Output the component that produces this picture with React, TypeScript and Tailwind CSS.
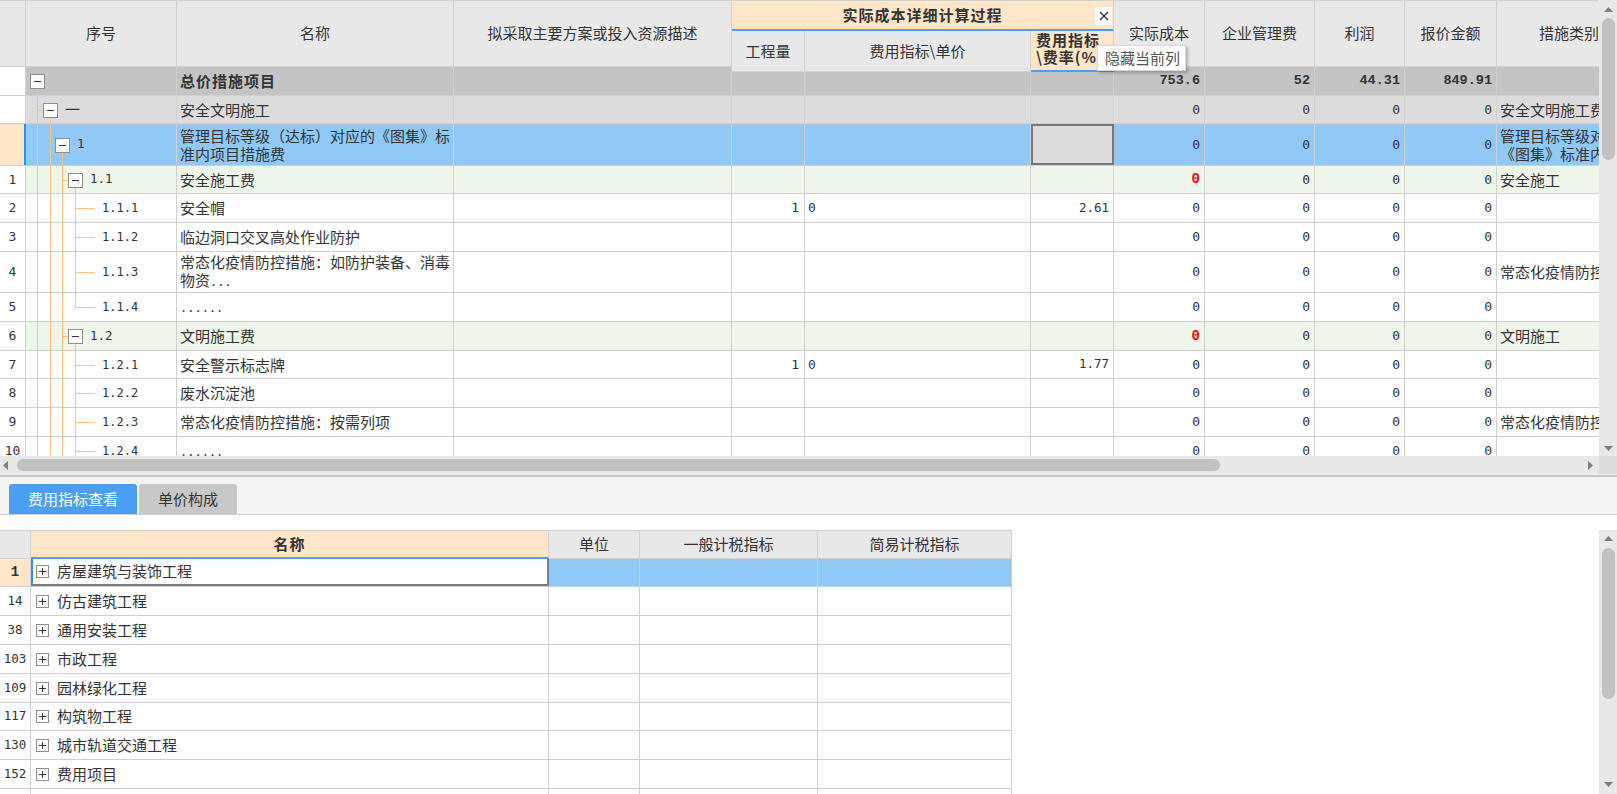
import React from "react";

const F = "font-['Noto_Sans_CJK_SC',sans-serif]";
const M = "font-['DejaVu_Sans_Mono','Noto_Sans_CJK_SC',monospace]";
const MB = "font-['Liberation_Mono','Noto_Sans_CJK_SC',monospace]";

const LINE_X = ["left-[11px]", "left-[24px]", "left-[36px]", "left-[49px]"];
const BOX_X = ["left-[4px]", "left-[17px]", "left-[29px]", "left-[42px]"];
const CONN = ["", "left-[11px] w-[6px]", "left-[24px] w-[5px]", "left-[36px] w-[6px]"];
const LABEL_ML = ["ml-[26px]", "ml-[39px]", "ml-[51px]", "ml-[64px]"];
const LC = "absolute bg-[#f7c282]";

type TreeSpec =
  | { kind: "node"; level: number; label?: string }
  | { kind: "leaf"; last?: boolean; label: string };

function MinusBox({ pos }: { pos: string }) {
  return (
    <div className={`absolute top-[calc(50%-7px)] ${pos} w-[15px] h-[15px] bg-white border border-[#8e8e8e]`}>
      <div className="absolute left-[3px] top-[6px] w-[7px] h-px bg-[#333]" />
    </div>
  );
}

function PlusBox() {
  return (
    <div className="relative w-[13px] h-[13px] shrink-0 bg-white border border-[#8e8e8e]">
      <div className="absolute left-[2px] top-[5px] w-[7px] h-px bg-[#333]" />
      <div className="absolute left-[5px] top-[2px] w-px h-[7px] bg-[#333]" />
    </div>
  );
}

function TreeCell({ spec }: { spec: TreeSpec }) {
  if (spec.kind === "node") {
    const L = spec.level;
    return (
      <>
        {[0, 1, 2].slice(0, L).map((i) => (
          <div key={i} className={`${LC} top-0 bottom-0 w-px ${LINE_X[i]}`} />
        ))}
        {L > 0 && <div className={`${LC} top-1/2 h-px ${CONN[L]}`} />}
        <div className={`${LC} top-1/2 bottom-0 w-px ${LINE_X[L]}`} />
        <MinusBox pos={BOX_X[L]} />
        {spec.label && (
          <span
            className={`${LABEL_ML[L]} ${
              spec.label === "一" ? "text-[15px]" : `${M} text-[12.5px]`
            }`}
          >
            {spec.label}
          </span>
        )}
      </>
    );
  }
  return (
    <>
      {[0, 1, 2].map((i) => (
        <div key={i} className={`${LC} top-0 bottom-0 w-px ${LINE_X[i]}`} />
      ))}
      {spec.last ? (
        <div className={`${LC} top-0 h-1/2 w-px left-[49px]`} />
      ) : (
        <div className={`${LC} top-0 bottom-0 w-px left-[49px]`} />
      )}
      <div className={`${LC} top-1/2 h-px left-[49px] w-[20px]`} />
      <span className={`ml-[76px] ${M} text-[12px]`}>{spec.label}</span>
    </>
  );
}

type Row = {
  h: string;
  bg: string;
  num?: string;
  tree: TreeSpec;
  name: React.ReactNode;
  bold?: boolean;
  sel?: boolean;
  qty?: string;
  price?: string;
  rate?: string;
  v: string[];
  red?: boolean;
  cat?: React.ReactNode;
};

const Z = ["0", "0", "0", "0"];
const dots = <span className={`${M} text-[12px]`}>......</span>;

const rows: Row[] = [
  { h: "h-[29px]", bg: "bg-[#c4c4c4]", tree: { kind: "node", level: 0 }, name: "总价措施项目", bold: true, v: ["753.6", "52", "44.31", "849.91"] },
  { h: "h-[28px]", bg: "bg-[#dcdcdc]", tree: { kind: "node", level: 1, label: "一" }, name: "安全文明施工", v: Z, cat: "安全文明施工费" },
  {
    h: "h-[42px]",
    bg: "bg-[#90c8f6]",
    sel: true,
    tree: { kind: "node", level: 2, label: "1" },
    name: (
      <>
        管理目标等级（达标）对应的《图集》标
        <br />
        准内项目措施费
      </>
    ),
    v: Z,
    cat: (
      <>
        管理目标等级对应的
        <br />
        《图集》标准内项目措施费
      </>
    ),
  },
  { h: "h-[28px]", bg: "bg-[#edf6e8]", num: "1", tree: { kind: "node", level: 3, label: "1.1" }, name: "安全施工费", red: true, v: Z, cat: "安全施工" },
  { h: "h-[29px]", bg: "bg-white", num: "2", tree: { kind: "leaf", label: "1.1.1" }, name: "安全帽", qty: "1", price: "0", rate: "2.61", v: Z },
  { h: "h-[29px]", bg: "bg-white", num: "3", tree: { kind: "leaf", label: "1.1.2" }, name: "临边洞口交叉高处作业防护", v: Z },
  {
    h: "h-[41px]",
    bg: "bg-white",
    num: "4",
    tree: { kind: "leaf", label: "1.1.3" },
    name: (
      <>
        常态化疫情防控措施：如防护装备、消毒
        <br />
        物资<span className={`${M} text-[12px]`}>...</span>
      </>
    ),
    v: Z,
    cat: "常态化疫情防控措施",
  },
  { h: "h-[29px]", bg: "bg-white", num: "5", tree: { kind: "leaf", label: "1.1.4", last: true }, name: dots, v: Z },
  { h: "h-[29px]", bg: "bg-[#edf6e8]", num: "6", tree: { kind: "node", level: 3, label: "1.2" }, name: "文明施工费", red: true, v: Z, cat: "文明施工" },
  { h: "h-[28px]", bg: "bg-white", num: "7", tree: { kind: "leaf", label: "1.2.1" }, name: "安全警示标志牌", qty: "1", price: "0", rate: "1.77", v: Z },
  { h: "h-[29px]", bg: "bg-white", num: "8", tree: { kind: "leaf", label: "1.2.2" }, name: "废水沉淀池", v: Z },
  { h: "h-[29px]", bg: "bg-white", num: "9", tree: { kind: "leaf", label: "1.2.3" }, name: "常态化疫情防控措施：按需列项", v: Z, cat: "常态化疫情防控措施" },
  { h: "h-[29px]", bg: "bg-white", num: "10", tree: { kind: "leaf", label: "1.2.4" }, name: dots, v: Z },
];

const CELL = "shrink-0 h-full border-r border-[#d0d0d0] overflow-hidden flex items-center";
const HCELL = "shrink-0 h-full border-r border-b border-[#d0d0d0] bg-[#e8e8e8] flex items-center justify-center text-[15px]";

function TopRow({ r }: { r: Row }) {
  const numCls = r.bold ? `${MB} text-[13.5px] font-bold` : `${M} text-[13px]`;
  return (
    <div className={`flex ${r.h} shrink-0 border-b border-[#d0d0d0] ${r.bg}`}>
      <div
        className={`shrink-0 h-full w-[26px] overflow-hidden flex items-center justify-center ${M} text-[13px] ${
          r.sel ? "bg-[#ffe6c9] border-r-2 border-[#3a8ee6]" : "bg-white border-r border-[#d0d0d0]"
        }`}
      >
        {r.num}
      </div>
      <div className={`${CELL} w-[151px] relative`}>
        <TreeCell spec={r.tree} />
      </div>
      <div className={`${CELL} w-[277px] pl-[3px] text-[15px] leading-[18px] ${r.bold ? "font-bold tracking-[1px]" : ""}`}>
        <div>{r.name}</div>
      </div>
      <div className={`${CELL} w-[278px]`} />
      <div className={`${CELL} w-[73px] justify-end pr-[5px] ${M} text-[13px]`}>{r.qty}</div>
      <div className={`${CELL} w-[226px] pl-[3px] ${M} text-[13px]`}>{r.price}</div>
      {r.sel ? (
        <div className="shrink-0 h-full w-[83px] border-2 border-[#777] bg-[#dcdcdc]" />
      ) : (
        <div className={`${CELL} w-[83px] justify-end pr-[4px] ${M} text-[12.5px]`}>{r.rate}</div>
      )}
      <div className={`${CELL} w-[91px] justify-end pr-[4px]`}>
        {r.red ? (
          <span className={`${MB} text-[14px] font-bold text-[#ff0000]`}>{r.v[0]}</span>
        ) : (
          <span className={numCls}>{r.v[0]}</span>
        )}
      </div>
      <div className={`${CELL} w-[110px] justify-end pr-[4px]`}>
        <span className={numCls}>{r.v[1]}</span>
      </div>
      <div className={`${CELL} w-[90px] justify-end pr-[4px]`}>
        <span className={numCls}>{r.v[2]}</span>
      </div>
      <div className={`${CELL} w-[92px] justify-end pr-[4px]`}>
        <span className={numCls}>{r.v[3]}</span>
      </div>
      <div className={`${CELL} w-[145px] pl-[3px] text-[15px] leading-[18px] whitespace-nowrap`}>
        <div>{r.cat}</div>
      </div>
    </div>
  );
}

function UpArrow() {
  return (
    <svg width="9" height="5" viewBox="0 0 9 5" className="shrink-0">
      <polygon points="0,5 9,5 4.5,0" fill="#7d7d7d" />
    </svg>
  );
}
function DownArrow() {
  return (
    <svg width="9" height="5" viewBox="0 0 9 5" className="shrink-0">
      <polygon points="0,0 9,0 4.5,5" fill="#7d7d7d" />
    </svg>
  );
}
function LeftArrow() {
  return (
    <svg width="5" height="9" viewBox="0 0 5 9" className="shrink-0">
      <polygon points="5,0 5,9 0,4.5" fill="#7d7d7d" />
    </svg>
  );
}
function RightArrow() {
  return (
    <svg width="5" height="9" viewBox="0 0 5 9" className="shrink-0">
      <polygon points="0,0 0,9 5,4.5" fill="#7d7d7d" />
    </svg>
  );
}

function TopHeader() {
  return (
    <div className="flex h-[67px] shrink-0 border-t border-[#cfcfcf] relative">
      <div className={`${HCELL} w-[26px]`} />
      <div className={`${HCELL} w-[151px]`}>序号</div>
      <div className={`${HCELL} w-[277px]`}>名称</div>
      <div className={`${HCELL} w-[278px]`}>拟采取主要方案或投入资源描述</div>
      <div className="shrink-0 w-[382px] h-full flex flex-col">
        <div className="relative h-[30px] shrink-0 bg-[#ffe6c9] border-b-2 border-[#4a9ff5] border-r border-r-[#d0d0d0] flex items-center justify-center text-[15px] font-bold tracking-[1px]">
          实际成本详细计算过程
          <div className="absolute right-[1px] top-[6px] w-[17px] h-[18px] bg-white flex items-center justify-center">
            <svg width="10" height="10" viewBox="0 0 10 10">
              <path d="M1 1 L9 9 M9 1 L1 9" stroke="#333" strokeWidth="1.4" />
            </svg>
          </div>
        </div>
        <div className="flex flex-1">
          <div className={`${HCELL} w-[73px]`}>工程量</div>
          <div className={`${HCELL} w-[226px]`}>费用指标\单价</div>
          <div className="shrink-0 h-full w-[83px] border-r border-[#d0d0d0] border-b-2 border-b-[#4a9ff5] bg-[#ffe6c9] overflow-hidden flex flex-col justify-center pl-[5px] pb-[5px] text-[15px] leading-[17px] font-bold tracking-[1px] whitespace-nowrap">
            <div>费用指标</div>
            <div>\费率(%)</div>
          </div>
        </div>
      </div>
      <div className={`${HCELL} w-[91px]`}>实际成本</div>
      <div className={`${HCELL} w-[110px]`}>企业管理费</div>
      <div className={`${HCELL} w-[90px]`}>利润</div>
      <div className={`${HCELL} w-[92px]`}>报价金额</div>
      <div className={`${HCELL} w-[145px]`}>措施类别</div>
      <div className="absolute left-[1097px] top-[44px] w-[89px] h-[26px] bg-white border border-[#d8d8d8] shadow-[2px_2px_3px_rgba(0,0,0,0.25)] flex items-center pl-[7px] text-[15px] text-[#555] z-10">
        隐藏当前列
      </div>
    </div>
  );
}

const bottomRows: { n: string; t: string; h: string }[] = [
  { n: "1", t: "房屋建筑与装饰工程", h: "h-[28px]" },
  { n: "14", t: "仿古建筑工程", h: "h-[29px]" },
  { n: "38", t: "通用安装工程", h: "h-[29px]" },
  { n: "103", t: "市政工程", h: "h-[29px]" },
  { n: "109", t: "园林绿化工程", h: "h-[29px]" },
  { n: "117", t: "构筑物工程", h: "h-[28px]" },
  { n: "130", t: "城市轨道交通工程", h: "h-[29px]" },
  { n: "152", t: "费用项目", h: "h-[29px]" },
  { n: "", t: "", h: "h-[29px]" },
];

function BottomGrid() {
  return (
    <div className="w-[1012px] flex flex-col">
      <div className="flex h-[29px] shrink-0 border-t border-[#cfcfcf]">
        <div className={`${HCELL} w-[31px]`} />
        <div className="shrink-0 h-full w-[518px] border-r border-[#d0d0d0] border-b-2 border-b-[#4a9ff5] bg-[#ffe6c9] flex items-center justify-center text-[15px] font-bold tracking-[1px]">
          名称
        </div>
        <div className={`${HCELL} w-[91px]`}>单位</div>
        <div className={`${HCELL} w-[178px]`}>一般计税指标</div>
        <div className={`${HCELL} w-[194px]`}>简易计税指标</div>
      </div>
      {bottomRows.map((r, i) => {
        const sel = i === 0;
        return (
          <div key={i} className={`flex ${r.h} shrink-0 border-b border-[#d0d0d0]`}>
            <div
              className={`${CELL} w-[31px] justify-center ${
                sel ? `bg-[#ffe6c9] font-bold ${MB} text-[14px]` : `bg-white ${M} text-[12.5px]`
              }`}
            >
              {r.n}
            </div>
            {sel ? (
              <div className="shrink-0 h-full w-[518px] border-2 border-t-0 border-[#7b7b7b] border-l-[#3a8ee6] flex items-center pl-[3px] text-[15px]">
                <PlusBox />
                <span className="ml-[8px]">{r.t}</span>
              </div>
            ) : (
              <div className={`${CELL} w-[518px] pl-[5px] text-[15px]`}>
                {r.t && <PlusBox />}
                <span className="ml-[8px]">{r.t}</span>
              </div>
            )}
            <div className={`${CELL} w-[91px] ${sel ? "bg-[#90c8f6]" : ""}`} />
            <div className={`${CELL} w-[178px] ${sel ? "bg-[#90c8f6]" : ""}`} />
            <div className={`${CELL} w-[194px] ${sel ? "bg-[#90c8f6]" : ""}`} />
          </div>
        );
      })}
    </div>
  );
}

export default function App() {
  return (
    <div className={`w-[1617px] h-[794px] overflow-hidden bg-white flex flex-col text-[#333] ${F}`}>
      {/* top grid */}
      <div className="flex h-[456px] shrink-0">
        <div className="w-[1599px] h-full overflow-hidden flex flex-col">
          <TopHeader />
          {rows.map((r, i) => (
            <TopRow key={i} r={r} />
          ))}
        </div>
        <div className="w-[18px] h-full bg-[#e8e8e8] flex flex-col items-center">
          <div className="mt-[7px]">
            <UpArrow />
          </div>
          <div className="mt-[6px] w-[13px] h-[142px] rounded-full bg-[#c1c1c1]" />
          <div className="flex-1" />
          <div className="mb-[5px]">
            <DownArrow />
          </div>
        </div>
      </div>
      {/* horizontal scrollbar */}
      <div className="flex h-[18px] shrink-0">
        <div className="w-[1599px] h-full bg-[#e8e8e8] flex items-center">
          <div className="ml-[3px]">
            <LeftArrow />
          </div>
          <div className="ml-[9px] w-[1203px] h-[12px] rounded-full bg-[#c1c1c1]" />
          <div className="flex-1" />
          <div className="mr-[6px]">
            <RightArrow />
          </div>
        </div>
        <div className="w-[18px] h-full bg-[#dcdcdc]" />
      </div>
      <div className="h-[3px] shrink-0 bg-[#f0f0f0] border-b-2 border-[#c4c4c4]" />
      {/* tabs */}
      <div className="h-[38px] shrink-0 bg-[#f4f4f4] border-b border-[#cdcdcd] flex items-end pl-[9px] gap-[2px]">
        <div className="w-[128px] h-[30px] rounded-t-[3px] bg-[#4a9ff5] text-white text-[15px] flex items-center justify-center">
          费用指标查看
        </div>
        <div className="w-[98px] h-[30px] rounded-t-[3px] bg-[#c8c8c8] text-[#333] text-[15px] flex items-center justify-center">
          单价构成
        </div>
      </div>
      <div className="h-[15px] shrink-0" />
      {/* bottom grid */}
      <div className="flex flex-1 min-h-0">
        <div className="flex-1 overflow-hidden">
          <BottomGrid />
        </div>
        <div className="w-[18px] h-full bg-[#e8e8e8] flex flex-col items-center">
          <div className="mt-[6px]">
            <UpArrow />
          </div>
          <div className="mt-[7px] w-[13px] h-[151px] rounded-full bg-[#c1c1c1]" />
          <div className="flex-1" />
          <div className="mb-[7px]">
            <DownArrow />
          </div>
        </div>
      </div>
    </div>
  );
}
